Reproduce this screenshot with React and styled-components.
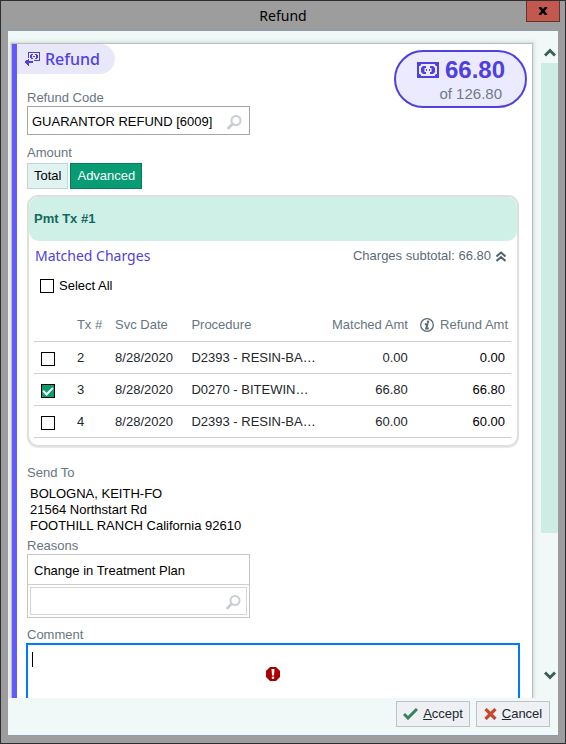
import React, { useState } from "react";
import styled, { createGlobalStyle } from "styled-components";

const sans = '"Liberation Sans", Arial, sans-serif';
const humanist = '"Noto Sans", "Segoe UI", sans-serif';

const color = {
  ink: "#000",
  muted: "#66757f",
  purple: "#4f41e0",
  mint: "#f0f9f7",
  mintDeep: "#cdece4",
  green: "#079c74",
};

const GlobalStyle = createGlobalStyle`
  *, *::before, *::after { box-sizing: border-box; }
  body { margin: 0; font: 13px/16px ${sans}; color: ${color.ink}; }
  button, input, textarea { font: inherit; color: inherit; }
`;

const Window = styled.div`
  display: flex;
  flex-direction: column;
  height: 100vh;
  padding: 0 7px 7px;
  border: 1px solid #302e33;
  background: #9d9d9d;
`;

const TitleBar = styled.header`
  display: grid;
  grid-template-columns: 1fr auto 1fr;
  height: 29px;
  flex: none;
`;

const Title = styled.h1`
  grid-column: 2;
  margin: 0;
  font: 400 14px/29px ${humanist};
`;

const CloseButton = styled.button`
  justify-self: end;
  display: flex;
  align-items: center;
  justify-content: center;
  width: 34px;
  height: 21px;
  margin-right: -2px;
  padding: 0;
  border: 1px solid #5f3634;
  border-top: 0;
  background: #c3584f;
`;

const Body = styled.div`
  display: flex;
  flex-direction: column;
  flex: 1;
  min-height: 0;
  border-top: 1px solid #8d9db0;
  border-bottom: 1px solid #8d9db0;
  background: ${color.mint};
`;

const Viewport = styled.div`
  display: flex;
  flex: 1;
  min-height: 0;
  overflow: hidden;
`;

const Sheet = styled.main`
  flex: 1;
  min-width: 0;
  height: max-content;
  margin: 13px 9px 0 4px;
  padding-bottom: 16px;
  border-left: 5px solid #6259ff;
  background: #fff;
  box-shadow: 0 0 1px 1px #b9c1bf, 0 0 3px 3px #dfe6e4;
`;

const Scrollbar = styled.div`
  display: flex;
  flex-direction: column;
  width: 17px;
  padding: 11px 0 12px;
`;

const ScrollButton = styled.button`
  display: flex;
  align-items: center;
  justify-content: center;
  height: 21px;
  padding: 0;
  border: 0;
  background: none;
`;

const Track = styled.div`
  flex: 1;
`;

const Thumb = styled.div`
  height: 78%;
  background: ${color.mintDeep};
`;

const Top = styled.div`
  display: flex;
  justify-content: space-between;
  align-items: flex-start;
`;

const SectionTitle = styled.h2`
  display: flex;
  align-items: center;
  gap: 5px;
  width: max-content;
  height: 30px;
  margin: 0 0 16px;
  padding: 0 15px 0 8px;
  border-radius: 0 15px 15px 0;
  background: #e9e7fa;
  color: ${color.purple};
  font: 500 16px/30px ${humanist};
`;

const Inset = styled.div`
  padding: 0 12px 0 10px;
`;

const Badge = styled.div`
  display: flex;
  flex-direction: column;
  align-items: flex-end;
  width: 133px;
  height: 58px;
  margin: 6px 5px 0 0;
  padding: 5px 20px 0 0;
  border: 2px solid ${color.purple};
  border-radius: 29px;
  background: #eceafe;
`;

const BadgeAmount = styled.div`
  display: flex;
  align-items: center;
  gap: 6px;
  color: ${color.purple};
  font-size: 24px;
  line-height: 26px;
  font-weight: 700;
`;

const BadgeTotal = styled.div`
  padding-right: 3px;
  color: #6f7a88;
  font-size: 15px;
  line-height: 22px;
`;

const Label = styled.label`
  display: block;
  color: ${color.muted};
  line-height: 16px;
`;

const GroupLabel = styled.div`
  margin-top: ${(p) => (p.$spaced ? "10px" : "0")};
  color: ${color.muted};
  line-height: 16px;
`;

const Lookup = styled.div`
  display: flex;
  align-items: center;
  width: ${(p) => (p.$fill ? "auto" : "223px")};
  height: ${(p) => (p.$fill ? "28px" : "29px")};
  margin: ${(p) => (p.$fill ? "2px" : "0")};
  padding: 3px ${(p) => (p.$fill ? "5px" : "7px")} 0 4px;
  border: 1px solid ${(p) => (p.$fill ? "#d6d6d6" : "#a6a6a6")};
  background: #fff;
`;

const LookupInput = styled.input`
  flex: 1;
  min-width: 0;
  padding: 0;
  border: 0;
  outline: 0;
  background: none;
`;

const LookupButton = styled.button`
  display: flex;
  padding: 0;
  border: 0;
  background: none;
`;

const Toggle = styled.div`
  display: flex;
  gap: 2px;
  margin: 2px 0 6px;
`;

const ToggleButton = styled.button`
  height: 26px;
  padding: 0 6px;
  border: 1px solid ${(p) => (p.$on ? "#087a5c" : "#bfd5da")};
  background: ${(p) => (p.$on ? color.green : "#e1f3f0")};
  color: ${(p) => (p.$on ? "#fff" : color.ink)};
`;

const Payment = styled.section`
  width: calc(100% - 1px);
  margin: 0 0 18px;
  padding-bottom: 7px;
  border: 2px solid #dfdfdf;
  border-radius: 11px;
  box-shadow: 0 1px 1px #e8e8e8;
`;

const PaymentTitle = styled.h3`
  margin: 0;
  padding-left: 5px;
  border-radius: 10px;
  background: #cff0e6;
  color: #13695f;
  font-size: 13px;
  line-height: 44px;
`;

const ChargesBar = styled.div`
  display: flex;
  justify-content: space-between;
  align-items: center;
  height: 30px;
  padding: 0 11px 0 6px;
`;

const ChargesTitle = styled.h4`
  margin: 0;
  color: ${color.purple};
  font: 400 14px/20px ${humanist};
`;

const Subtotal = styled.button`
  display: flex;
  align-items: center;
  gap: 5px;
  padding: 0;
  border: 0;
  background: none;
  color: #5d6b78;
`;

const CheckLabel = styled.label`
  display: flex;
  align-items: center;
  gap: 5px;
  height: 30px;
  padding-left: 11px;
`;

const Checkbox = styled.input`
  appearance: none;
  display: block;
  width: 14px;
  height: 14px;
  margin: 0;
  border: 1px solid #000;
  background: #fff;

  &:checked { background: ${color.green}; }
  &:checked::after {
    content: "";
    display: block;
    width: 10px;
    height: 6px;
    margin: 2px 0 0 1px;
    border: solid #fff;
    border-width: 0 0 2px 2px;
    transform: rotate(-45deg);
  }
`;

const ChargesTable = styled.table`
  width: calc(100% - 11px);
  margin: 8px 6px 0 5px;
  border-collapse: collapse;
  table-layout: fixed;
  color: #22272b;
`;

const Col = styled.col`
  width: ${(p) => p.$w};
`;

const HeadCell = styled.th`
  height: 32px;
  padding: 0 ${(p) => (p.$end ? "3px" : "0")} 0 0;
  border-bottom: 1px solid #cfcfcf;
  color: ${color.muted};
  font-weight: 400;
  text-align: ${(p) => (p.$end ? "right" : "left")};
  white-space: nowrap;
`;

const Cell = styled.td`
  height: 32px;
  padding: ${(p) => (p.$check ? "3px 0 0 7px" : p.$last ? "1px 6px 0 0" : p.$end ? "1px 3px 0 0" : "1px 0 0")};
  border-bottom: 1px solid #cfcfcf;
  color: ${(p) => (p.$last ? color.ink : "inherit")};
  text-align: ${(p) => (p.$end ? "right" : "left")};
  white-space: nowrap;
  overflow: hidden;
  text-overflow: ellipsis;
`;

const HeadWithIcon = styled.span`
  display: flex;
  align-items: center;
  justify-content: flex-end;
  gap: 6px;
`;

const Address = styled.address`
  margin: 5px 3px 4px;
  font-style: normal;
  line-height: 16px;
`;

const ReasonBox = styled.div`
  width: 223px;
  margin-bottom: 9px;
  border: 1px solid #c6c6c6;
`;

const Reason = styled.div`
  height: 30px;
  padding-left: 6px;
  border-bottom: 1px solid #cfcfcf;
  line-height: 31px;
`;

const CommentBox = styled.div`
  position: relative;
  margin: 0 0 0 -1px;
`;

const CommentInput = styled.textarea`
  display: block;
  width: 100%;
  height: 63px;
  padding: 6px 4px;
  border: 2px solid #007bff;
  outline: 0;
  resize: none;
  background: #fff;
`;

const Caret = styled.span`
  position: absolute;
  left: 6px;
  top: 9px;
  width: 1px;
  height: 15px;
  background: #000;
`;

const Required = styled.span`
  position: absolute;
  left: 50%;
  top: 24px;
  display: flex;
  margin-left: -7px;
`;

const Footer = styled.footer`
  display: flex;
  justify-content: flex-end;
  gap: 6px;
  height: 37px;
  padding: 3px 8px 0 0;
  flex: none;
`;

const ActionButton = styled.button`
  display: flex;
  align-items: center;
  justify-content: center;
  gap: 5px;
  width: 74px;
  height: 26px;
  padding: 0;
  border: 1px solid #bdc3cb;
  background: #eef0f4;
  color: #202630;
  font: 13px/24px ${sans};
`;

const SearchIcon = () => (
  <svg width="15" height="15" viewBox="0 0 15 15" fill="none" stroke="#c8cdd6">
    <circle cx="9" cy="5.5" r="4.5" strokeWidth="2" />
    <path d="M5.5 9L1.5 13" strokeWidth="2.8" strokeLinecap="round" />
  </svg>
);

const RefundIcon = () => (
  <svg width="15" height="14" viewBox="0 0 15 14" fill={color.purple} shapeRendering="crispEdges">
    <path fillRule="evenodd" d="M3 0h12v9H9V8h5V1H4v5H3z" />
    <path d="M6 2h2v1H7v3h1v1H6V6H5V3h1zM10 2h2v1h1v3h-1v1h-2V6h1V3h-1zM8 4h2v1H8z" />
    <path d="M4 7v2h4v2H4v3H3v-1H2v-1H1v-1H0V9h1V8h2V7z" />
  </svg>
);

const MoneyIcon = () => (
  <svg width="22" height="16" viewBox="0 0 22 16" fill={color.purple}>
    <path fillRule="evenodd" d="M0 0h22v16H0zM2 4v8h1l1 1v1h14v-1l1-1h1V4h-1l-1-1V2H4v1L3 4z" />
    <path d="M6 4h3v2H7.500v4H9v2H6l-2-2V6zM16 4h-3v2h1.500v4H13v2h3l2-2V6z" />
    <path d="M9 7h1v2H9zM12 7h1v2h-1z" />
  </svg>
);

const CloseIcon = () => (
  <svg width="10" height="8" viewBox="0 0 10 8" stroke="#000" strokeWidth="2.6">
    <path d="M1.5 0L8.5 8M8.5 0L1.5 8" />
  </svg>
);

const Chevron = ({ down }) => (
  <svg width="12" height="9" viewBox="0 0 12 9" fill="none" stroke="#3d5e55" strokeWidth="3">
    <path d={down ? "M1 1.5l5 5 5-5" : "M1 7.5l5-5 5 5"} />
  </svg>
);

const CollapseIcon = () => (
  <svg width="10" height="11" viewBox="0 0 10 11" fill="none" stroke="#52626f" strokeWidth="2">
    <path d="M.5 5.5L5 1.5l4.5 4M.5 10L5 6l4.5 4" />
  </svg>
);

const InfoIcon = () => (
  <svg width="14" height="14" viewBox="0 0 14 14" fill="none" stroke="#586876">
    <circle cx="7" cy="7" r="6.3" strokeWidth="1.3" />
    <circle cx="8" cy="3.8" r="1.3" fill="#586876" stroke="none" />
    <path d="M4.800 6.300h2.600L6.200 10.500h2.600" strokeWidth="2" />
  </svg>
);

const ErrorIcon = () => (
  <svg width="14" height="14" viewBox="0 0 14 14">
    <path d="M4 0h6l4 4v6l-4 4H4l-4-4V4z" fill="#a80000" />
    <path d="M5.5 2h3L8 8.500H6z" fill="#fff" />
    <circle cx="7" cy="10.8" r="1.3" fill="#fff" />
  </svg>
);

const AcceptIcon = () => (
  <svg width="15" height="12" viewBox="0 0 15 12" fill="none" stroke="#35835f" strokeWidth="3">
    <path d="M1 6l4 4L14 1" />
  </svg>
);

const CancelIcon = () => (
  <svg width="13" height="12" viewBox="0 0 13 12" stroke="#c54a30" strokeWidth="3.2">
    <path d="M1.5 1l10 10M11.5 1l-10 10" />
  </svg>
);

const charges = [
  { tx: "2", date: "8/28/2020", procedure: "D2393 - RESIN-BA…", matched: "0.00", refund: "0.00", on: false },
  { tx: "3", date: "8/28/2020", procedure: "D0270 - BITEWIN…", matched: "66.80", refund: "66.80", on: true },
  { tx: "4", date: "8/28/2020", procedure: "D2393 - RESIN-BA…", matched: "60.00", refund: "60.00", on: false },
];

export default function App() {
  const [mode, setMode] = useState("Advanced");

  return (
    <Window>
      <GlobalStyle />
      <TitleBar>
        <Title>Refund</Title>
        <CloseButton aria-label="Close"><CloseIcon /></CloseButton>
      </TitleBar>
      <Body>
        <Viewport>
          <Sheet>
            <Top>
              <div>
                <SectionTitle><RefundIcon />Refund</SectionTitle>
                <Inset>
                  <Label htmlFor="code">Refund Code</Label>
                  <Lookup>
                    <LookupInput id="code" defaultValue="GUARANTOR REFUND [6009]" />
                    <LookupButton aria-label="Search refund codes"><SearchIcon /></LookupButton>
                  </Lookup>
                </Inset>
              </div>
              <Badge>
                <BadgeAmount><MoneyIcon />66.80</BadgeAmount>
                <BadgeTotal>of 126.80</BadgeTotal>
              </Badge>
            </Top>
            <Inset>
              <GroupLabel $spaced id="amount">Amount</GroupLabel>
              <Toggle role="group" aria-labelledby="amount">
                {["Total", "Advanced"].map((name) => (
                  <ToggleButton
                    key={name}
                    $on={mode === name}
                    aria-pressed={mode === name}
                    onClick={() => setMode(name)}
                  >
                    {name}
                  </ToggleButton>
                ))}
              </Toggle>
              <Payment>
                <PaymentTitle>Pmt Tx #1</PaymentTitle>
                <ChargesBar>
                  <ChargesTitle>Matched Charges</ChargesTitle>
                  <Subtotal>Charges subtotal: 66.80 <CollapseIcon /></Subtotal>
                </ChargesBar>
                <CheckLabel><Checkbox type="checkbox" />Select All</CheckLabel>
                <ChargesTable>
                  <colgroup>
                    <Col $w="9%" />
                    <Col $w="8%" />
                    <Col $w="16%" />
                    <Col />
                    <Col $w="18%" />
                    <Col $w="21%" />
                  </colgroup>
                  <thead>
                    <tr>
                      <HeadCell aria-label="Selected" />
                      <HeadCell>Tx #</HeadCell>
                      <HeadCell>Svc Date</HeadCell>
                      <HeadCell>Procedure</HeadCell>
                      <HeadCell $end>Matched Amt</HeadCell>
                      <HeadCell $end><HeadWithIcon><InfoIcon />Refund Amt</HeadWithIcon></HeadCell>
                    </tr>
                  </thead>
                  <tbody>
                    {charges.map((c) => (
                      <tr key={c.tx}>
                        <Cell $check><Checkbox type="checkbox" defaultChecked={c.on} aria-label={`Charge ${c.tx}`} /></Cell>
                        <Cell>{c.tx}</Cell>
                        <Cell>{c.date}</Cell>
                        <Cell>{c.procedure}</Cell>
                        <Cell $end>{c.matched}</Cell>
                        <Cell $end $last>{c.refund}</Cell>
                      </tr>
                    ))}
                  </tbody>
                </ChargesTable>
              </Payment>
              <GroupLabel>Send To</GroupLabel>
              <Address>
                BOLOGNA, KEITH-FO<br />
                21564 Northstart Rd<br />
                FOOTHILL RANCH California 92610
              </Address>
              <Label htmlFor="reason">Reasons</Label>
              <ReasonBox>
                <Reason>Change in Treatment Plan</Reason>
                <Lookup $fill>
                  <LookupInput id="reason" />
                  <LookupButton aria-label="Search reasons"><SearchIcon /></LookupButton>
                </Lookup>
              </ReasonBox>
              <Label htmlFor="comment">Comment</Label>
              <CommentBox>
                <CommentInput id="comment" required />
                <Caret />
                <Required><ErrorIcon /></Required>
              </CommentBox>
            </Inset>
          </Sheet>
          <Scrollbar>
            <ScrollButton aria-label="Scroll up"><Chevron /></ScrollButton>
            <Track><Thumb /></Track>
            <ScrollButton aria-label="Scroll down"><Chevron down /></ScrollButton>
          </Scrollbar>
        </Viewport>
        <Footer>
          <ActionButton><AcceptIcon /><span><u>A</u>ccept</span></ActionButton>
          <ActionButton><CancelIcon /><span><u>C</u>ancel</span></ActionButton>
        </Footer>
      </Body>
    </Window>
  );
}
